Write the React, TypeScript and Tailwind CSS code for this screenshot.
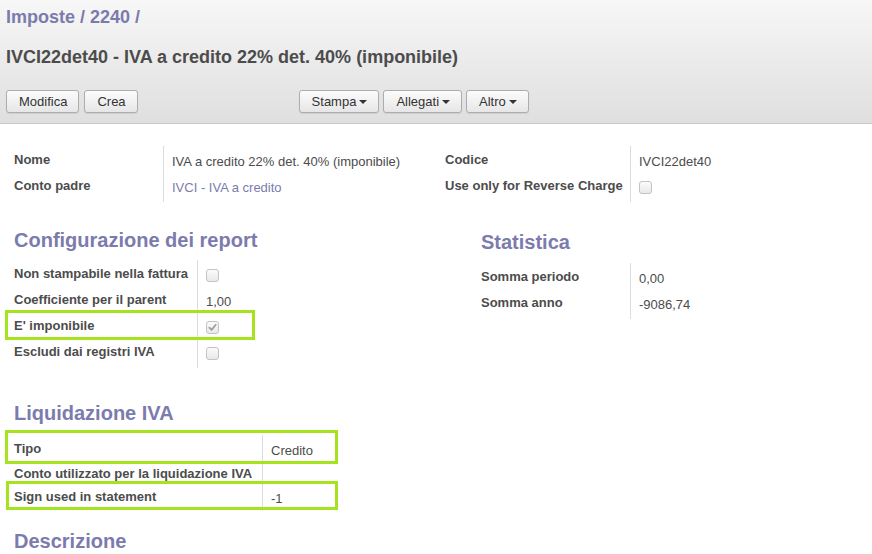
import React from 'react';

const font = { fontFamily: '"Liberation Sans", Arial, Helvetica, sans-serif' };

function Caret() {
  return <span className="ml-[3px] inline-block w-0 h-0 border-l-[4px] border-r-[4px] border-t-[4px] border-l-transparent border-r-transparent border-t-[#333] align-middle" />;
}

function Btn({ children, caret }: { children: React.ReactNode; caret?: boolean }) {
  return (
    <button className="h-[23px] pl-[12px] pr-[11px] text-[13px] text-[#333] rounded-[3px] border border-[#adadad] bg-gradient-to-b from-[#fcfcfc] to-[#e6e6e6] shadow-[0_1px_1px_rgba(0,0,0,0.08)] flex items-center">
      {children}
      {caret && <Caret />}
    </button>
  );
}

function Check({ checked }: { checked?: boolean }) {
  return (
    <span className="inline-flex w-[13px] h-[13px] rounded-[3px] border border-[#c3c3c3] bg-gradient-to-b from-[#fbfbfb] to-[#e9e9e9] items-center justify-center">
      {checked && (
        <svg width="9" height="9" viewBox="0 0 10 10">
          <path d="M1.5 5.2 L4 7.6 L8.6 2" stroke="#a0a0a0" strokeWidth="2" fill="none" strokeLinecap="round" strokeLinejoin="round" />
        </svg>
      )}
    </span>
  );
}

type Row = { label: string; value?: React.ReactNode; h?: number };

function Group({ rows, labelW, left, rowH = 26 }: { rows: Row[]; labelW: number; left: number; rowH?: number }) {
  return (
    <div className="flex" style={{ marginLeft: left }}>
      <div className="border-r border-[#dcdcdc] pl-[8px] py-[2px]" style={{ width: labelW }}>
        {rows.map((r) => (
          <div key={r.label} className="flex items-center font-bold text-[13px] text-[#4c4c4c] whitespace-nowrap" style={{ height: r.h ?? rowH }}>
            <span className="-mt-[3px]">{r.label}</span>
          </div>
        ))}
      </div>
      <div className="pl-[8px] py-[2px]">
        {rows.map((r) => (
          <div key={r.label} className="flex items-center text-[13px] text-[#4c4c4c] whitespace-nowrap" style={{ height: r.h ?? rowH }}>
            {r.value}
          </div>
        ))}
      </div>
    </div>
  );
}

function Heading({ children }: { children: React.ReactNode }) {
  return <h2 className="text-[20px] font-bold text-[#7c7bad] leading-[24px]">{children}</h2>;
}

function Box({ x, y, w, h }: { x: number; y: number; w: number; h: number }) {
  return <div className="absolute border-[3px] border-[#a5e31e] pointer-events-none" style={{ left: x, top: y, width: w, height: h }} />;
}

export default function App() {
  return (
    <div className="relative w-[872px] h-[554px] overflow-hidden bg-white" style={font}>
      {/* header */}
      <div className="h-[124px] bg-gradient-to-b from-[#f7f7f7] to-[#dfdfdf] border-b border-[#c8c8c8] pl-[6px]">
        <div className="pt-[5px] h-[28px] text-[18px] font-bold text-[#7c7bad] leading-[24px]">
          Imposte / 2240 <span className="text-[#7c7bad]">/</span>
        </div>
        <div className="mt-[17px] text-[18px] font-bold text-[#4c4c4c] leading-[24px]">
          IVCI22det40 - IVA a credito 22% det. 40% (imponibile)
        </div>
        <div className="mt-[21px] flex">
          <div className="flex gap-[5px]">
            <Btn>Modifica</Btn>
            <Btn>Crea</Btn>
          </div>
          <div className="flex gap-[4px] ml-[161px]">
            <Btn caret>Stampa</Btn>
            <Btn caret>Allegati</Btn>
            <Btn caret>Altro</Btn>
          </div>
        </div>
      </div>

      {/* body */}
      <div className="pt-[22px]">
        <div className="flex">
          <div className="w-[431px]">
            <Group
              left={6}
              labelW={158}
              rows={[
                { label: 'Nome', value: <span className="mt-[1px]">IVA a credito 22% det. 40% (imponibile)</span> },
                { label: 'Conto padre', value: <span className="mt-[1px] text-[#7c7bad]">IVCI - IVA a credito</span> },
              ]}
            />
          </div>
          <Group
            left={6}
            labelW={194}
            rows={[
              { label: 'Codice', value: <span className="mt-[1px]">IVCI22det40</span> },
              { label: 'Use only for Reverse Charge', value: <Check /> },
            ]}
          />
        </div>

        <div className="flex mt-[26px]">
          <div className="w-[467px]">
            <div className="pl-[14px]"><Heading>Configurazione dei report</Heading></div>
            <div className="mt-[8px]">
              <Group
                left={6}
                labelW={192}
                rows={[
                  { label: 'Non stampabile nella fattura', value: <Check /> },
                  { label: 'Coefficiente per il parent', value: <span className="mt-[1px]">1,00</span> },
                  { label: "E' imponibile", value: <Check checked /> },
                  { label: 'Escludi dai registri IVA', value: <Check /> },
                ]}
              />
            </div>
          </div>
          <div className="pt-[2px]">
            <div className="pl-[14px]"><Heading>Statistica</Heading></div>
            <div className="mt-[9px]">
              <Group
                left={6}
                labelW={158}
                rows={[
                  { label: 'Somma periodo', value: <span className="mt-[1px]">0,00</span> },
                  { label: 'Somma anno', value: <span className="mt-[1px]">-9086,74</span> },
                ]}
              />
            </div>
          </div>
        </div>

        <div className="mt-[33px] pl-[14px]"><Heading>Liquidazione IVA</Heading></div>
        <div className="mt-[10px]">
          <Group
            left={6}
            labelW={257}
            rows={[
              { label: 'Tipo', value: <span className="mt-[1px]">Credito</span>, h: 26 },
              { label: 'Conto utilizzato per la liquidazione IVA', value: '', h: 24 },
              { label: 'Sign used in statement', value: <span className="mt-[1px]">-1</span>, h: 22 },
            ]}
          />
        </div>
        <div className="mt-[18px] pl-[14px]"><Heading>Descrizione</Heading></div>
      </div>

      <Box x={5} y={310} w={250} h={30} />
      <Box x={5} y={430} w={333} h={34} />
      <Box x={6} y={481} w={332} h={29} />
    </div>
  );
}
